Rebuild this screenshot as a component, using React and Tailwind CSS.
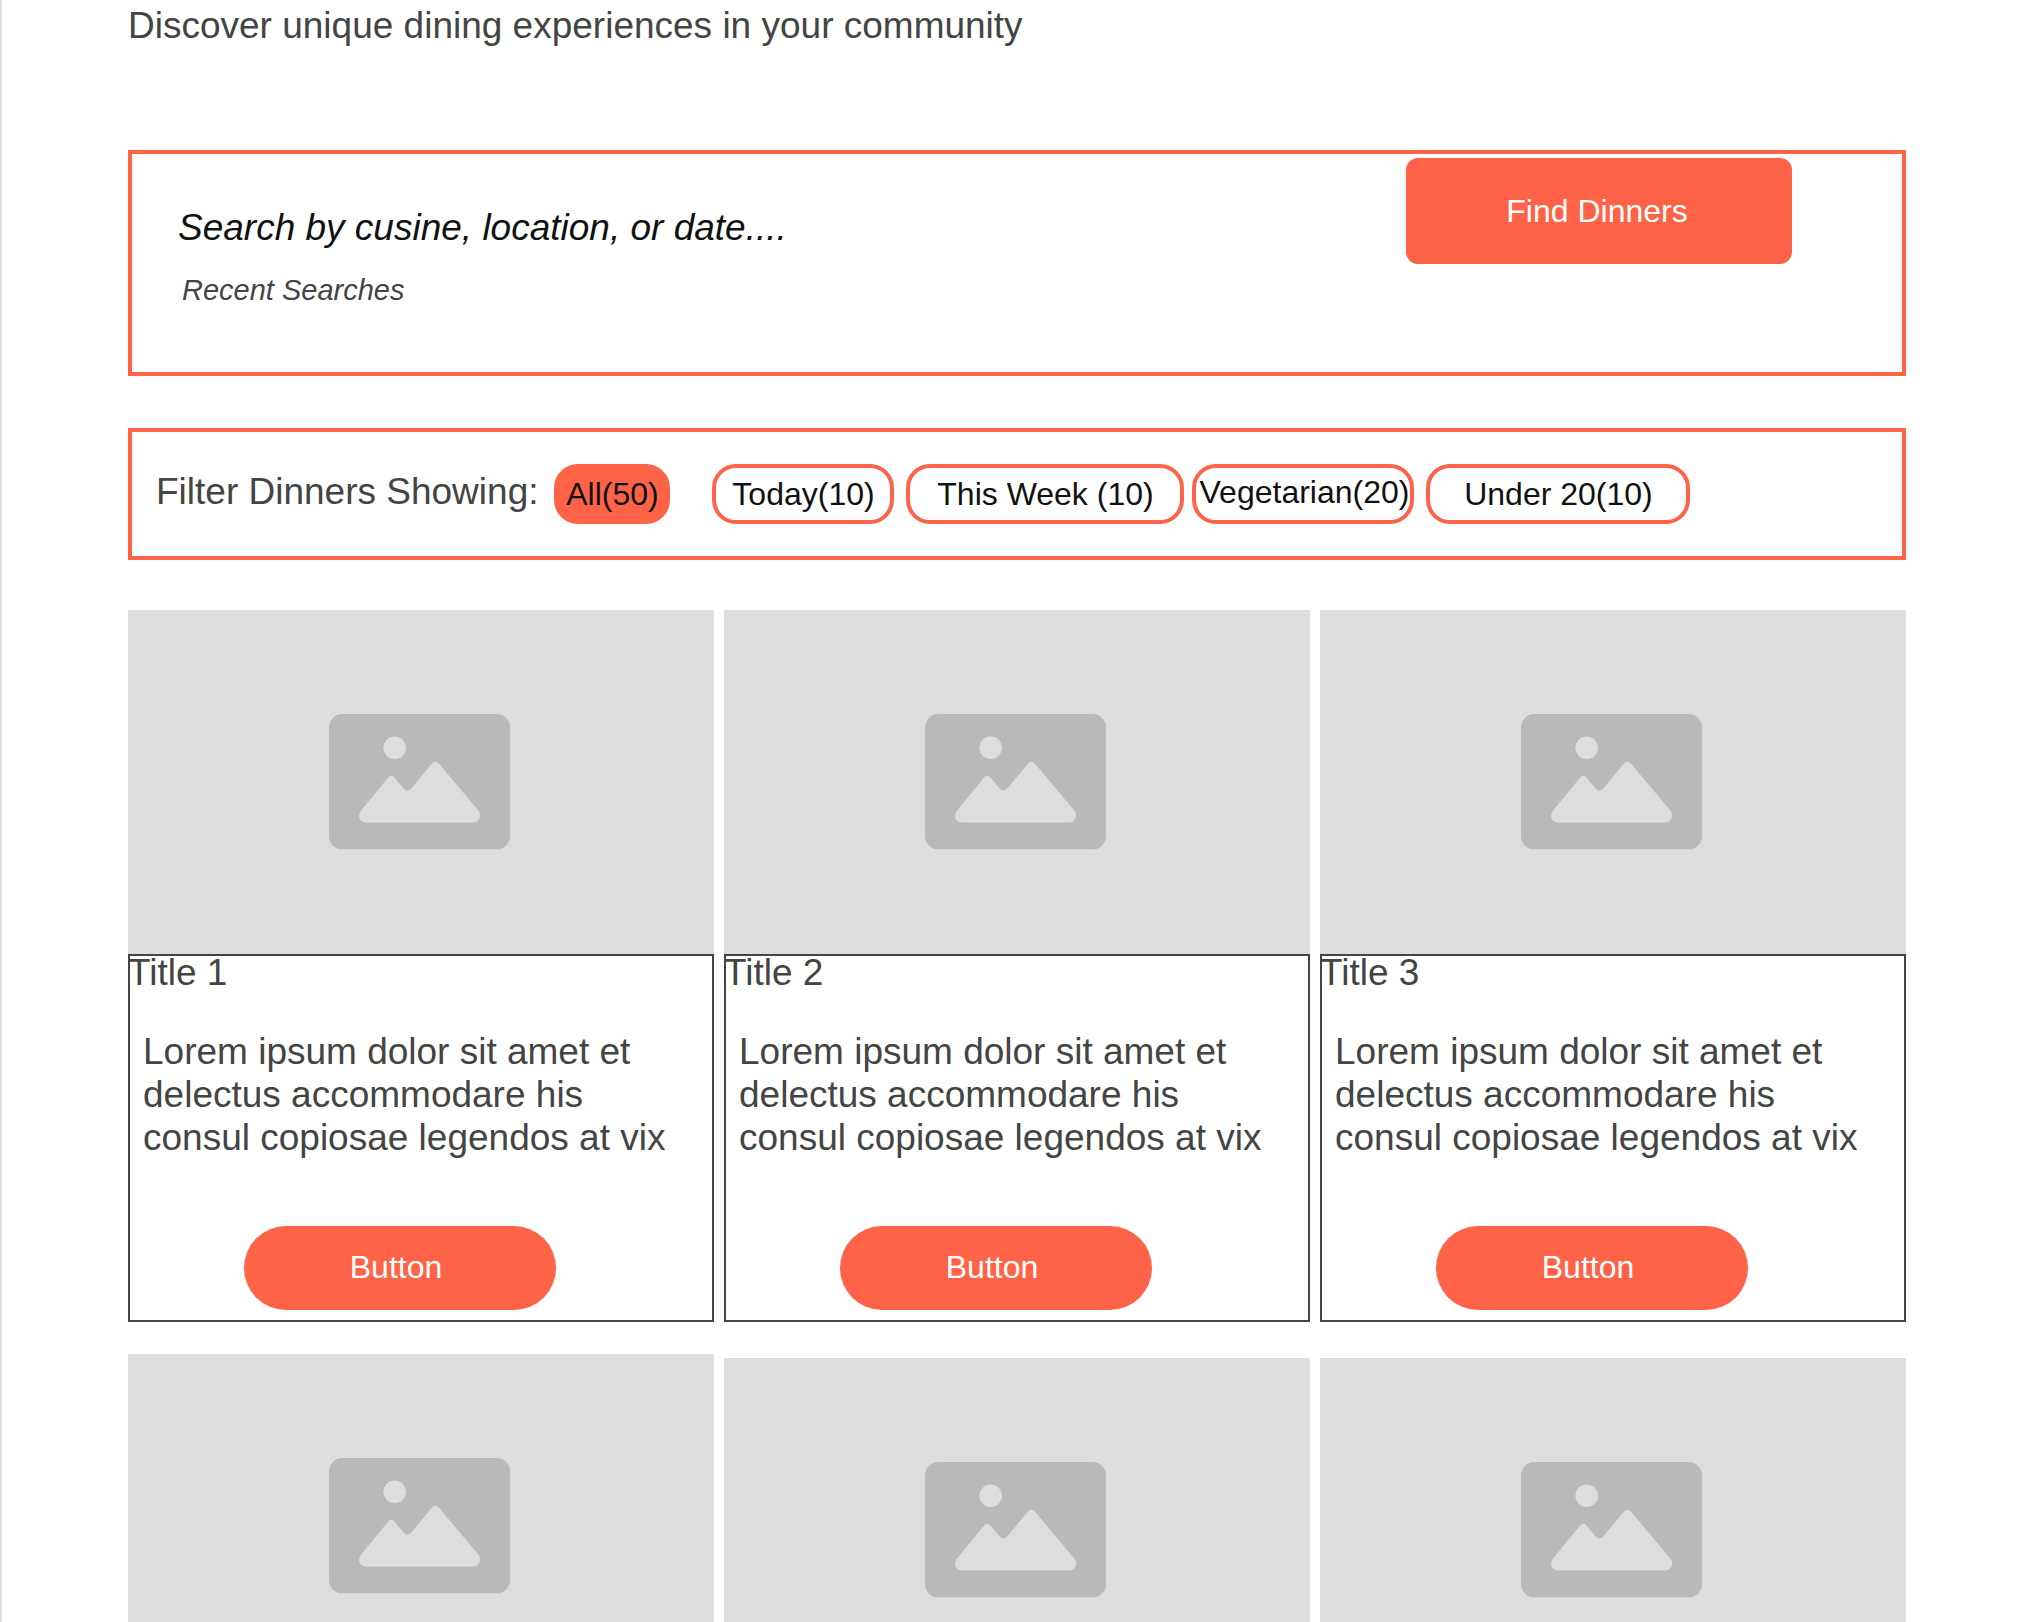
import { useState } from "react";

const filters = [
  { label: "All(50)", box: "w-[116px] mr-[42px]" },
  { label: "Today(10)", box: "w-[182px] mr-3" },
  { label: "This Week (10)", box: "w-[278px] mr-2" },
  { label: "Vegetarian(20)", box: "w-[222px] mr-3 pb-1 pl-0.5" },
  { label: "Under 20(10)", box: "w-[264px]" },
];

const blurb =
  "Lorem ipsum dolor sit amet et delectus accommodare his consul copiosae legendos at vix";

function ImagePlaceholder() {
  return (
    <div className="flex aspect-[293/172] w-full items-center justify-center bg-[#dddddd] pr-0.5">
      <svg viewBox="0 0 546 408" className="w-[31%]" aria-hidden="true">
        <rect width="546" height="408" rx="40" fill="#b9b9b9" />
        <circle cx="198" cy="102" r="34" fill="#dddddd" />
        <path
          d="M96 292 L177 193 Q188 180 199 193 L225 225 Q236 237 248 225 L310 150 Q320 138 332 150 L451 292 C462 307 453 327 435 327 H111 C93 327 84 307 96 292 Z"
          fill="#dddddd"
        />
      </svg>
    </div>
  );
}

function DinnerCard({ title }) {
  return (
    <article>
      <ImagePlaceholder />
      <div className="pb-3 outline-2 -outline-offset-2 outline-[#444444]">
        <h2 className="text-[37px] leading-[38px]">{title}</h2>
        <p className="mt-[38px] pr-10 pl-[15px] text-[37px] leading-[43px]">{blurb}</p>
        <button
          type="button"
          className="mt-[67px] ml-[116px] block h-[84px] w-[312px] rounded-full bg-[#ff6347] pr-2 pb-0.5 text-[32px] text-white"
        >
          Button
        </button>
      </div>
    </article>
  );
}

export default function App() {
  const [active, setActive] = useState("All(50)");

  return (
    <div className="h-screen overflow-hidden border-l-2 border-[#dddddd] bg-white font-['Liberation_Sans',Arial,sans-serif] text-[#444444]">
      <main className="mr-[136px] ml-[126px] pt-1">
        <p className="text-[37px] leading-[43px]">
          Discover unique dining experiences in your community
        </p>

        <form
          onSubmit={(e) => e.preventDefault()}
          className="mt-[103px] flex items-start justify-between border-4 border-[#ff6347] pt-1 pr-[110px] pb-[65px] pl-[46px]"
        >
          <div className="flex-1 pt-12 italic">
            <input
              type="text"
              aria-label="Search dinners"
              placeholder="Search by cusine, location, or date...."
              className="block h-[43px] w-full text-[37px] leading-[43px] text-[#111111] outline-none placeholder:text-[#111111]"
            />
            <p className="mt-6 pl-1 text-[29px] leading-[34px]">Recent Searches</p>
          </div>
          <button
            type="submit"
            className="h-[106px] w-[386px] rounded-xl bg-[#ff6347] pr-1 text-[32px] text-white"
          >
            Find Dinners
          </button>
        </form>

        <section className="mt-[52px] flex items-start border-4 border-[#ff6347] py-8 pl-6">
          <span className="mr-4 text-[37px] leading-[55px] whitespace-nowrap">
            Filter Dinners Showing:
          </span>
          {filters.map(({ label, box }) => (
            <button
              key={label}
              type="button"
              aria-pressed={active === label}
              onClick={() => setActive(label)}
              className={`h-[60px] rounded-3xl border-4 border-[#ff6347] text-[32px] whitespace-nowrap text-[#111111] ${box} ${
                active === label ? "bg-[#ff6347]" : "bg-white"
              }`}
            >
              {label}
            </button>
          ))}
        </section>

        <section className="mt-[50px] grid grid-cols-3 gap-x-[10px] gap-y-8">
          <DinnerCard title="Title 1" />
          <DinnerCard title="Title 2" />
          <DinnerCard title="Title 3" />
          <ImagePlaceholder />
          <div className="pt-1">
            <ImagePlaceholder />
          </div>
          <div className="pt-1">
            <ImagePlaceholder />
          </div>
        </section>
      </main>
    </div>
  );
}
